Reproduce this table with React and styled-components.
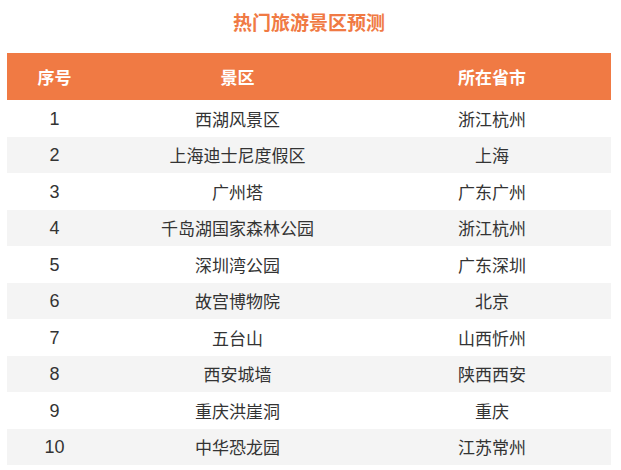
import React from "react";
import styled, { createGlobalStyle } from "styled-components";

const GlobalStyle = createGlobalStyle`
  html, body {
    margin: 0;
    padding: 0;
    background: #ffffff;
  }
  body {
    font-family: "Liberation Sans", "Noto Sans CJK SC", sans-serif;
  }
`;

const ORANGE = "#f07a44";

const Page = styled.main`
  width: 621px;
  height: 470px;
  padding: 0 10px 0 7px;
  box-sizing: border-box;
  overflow: hidden;
`;

const Title = styled.h2`
  margin: 0;
  height: 53px;
  line-height: 44px;
  text-align: center;
  color: ${ORANGE};
  font-size: 19px;
  font-weight: 700;
  font-family: "Noto Sans CJK SC", sans-serif;
`;

const Table = styled.div`
  display: grid;
  grid-template-columns: 95px 271px 238px;
  width: 604px;
`;

const Cell = styled.div`
  display: flex;
  align-items: center;
  justify-content: center;
  height: ${(p) => (p.$head ? "47px" : "36.5px")};
  background: ${(p) => (p.$head ? ORANGE : p.$gray ? "#f4f4f4" : "#ffffff")};
  color: ${(p) => (p.$head ? "#ffffff" : "#333333")};
  font-size: ${(p) => (p.$num ? "18px" : "17px")};
  font-weight: ${(p) => (p.$head ? 700 : 400)};
  padding-top: ${(p) => (p.$num ? "2px" : "0")};
  box-sizing: border-box;
  white-space: nowrap;
`;

const spots = [
  ["西湖风景区", "浙江杭州"],
  ["上海迪士尼度假区", "上海"],
  ["广州塔", "广东广州"],
  ["千岛湖国家森林公园", "浙江杭州"],
  ["深圳湾公园", "广东深圳"],
  ["故宫博物院", "北京"],
  ["五台山", "山西忻州"],
  ["西安城墙", "陕西西安"],
  ["重庆洪崖洞", "重庆"],
  ["中华恐龙园", "江苏常州"],
];

export default function App() {
  return (
    <Page>
      <GlobalStyle />
      <Title>热门旅游景区预测</Title>
      <Table>
        <Cell $head>序号</Cell>
        <Cell $head>景区</Cell>
        <Cell $head>所在省市</Cell>
        {spots.map(([name, city], i) => (
          <React.Fragment key={i}>
            <Cell $gray={i % 2 === 1} $num>{i + 1}</Cell>
            <Cell $gray={i % 2 === 1}>{name}</Cell>
            <Cell $gray={i % 2 === 1}>{city}</Cell>
          </React.Fragment>
        ))}
      </Table>
    </Page>
  );
}
